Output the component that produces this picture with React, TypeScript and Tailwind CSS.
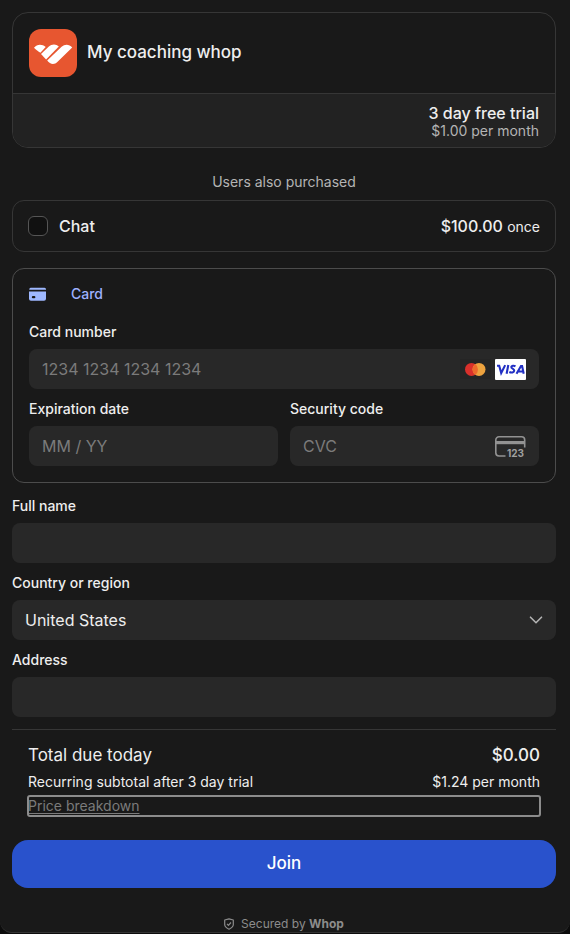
import type { ReactNode } from "react";

const labelClass = "mt-[10px] mb-[7px] block text-sm leading-5 font-medium text-[#eeeeee]";
const fieldClass =
  "block h-10 w-full rounded-lg bg-[#282828] px-[13px] text-base text-[#eeeeee] outline-none placeholder:text-[#7b7b7b]";

function Field({ id, label, placeholder, children }: { id: string; label: string; placeholder?: string; children?: ReactNode }) {
  return (
    <div>
      <label htmlFor={id} className={labelClass}>
        {label}
      </label>
      <div className="relative">
        <input id={id} type="text" placeholder={placeholder} className={fieldClass} />
        {children}
      </div>
    </div>
  );
}

function WhopLogo() {
  return (
    <svg viewBox="0 0 48 48" className="size-12 shrink-0" aria-hidden="true">
      <rect width="48" height="48" rx="12" fill="#e75630" />
      <g fill="#ffffff">
        <path d="M5 18.8 C8 14.8 13.2 14.8 16.7 18.1 L11.4 23.7 C9.2 22.6 7.1 20.9 5 18.8Z" />
        <path d="M12 24.9 L19.6 17.7 C22.9 14.8 27.2 14.8 29.8 17.6 L17.1 30.4Z" />
        <path d="M18.2 31.6 L32.6 17.7 C35.8 14.8 40.3 14.9 43.2 18.5 L28.6 32.8 C25.2 36.2 21.3 35.6 18.2 31.6Z" />
      </g>
    </svg>
  );
}

function CardIcon() {
  return (
    <svg viewBox="0 0 18 14" className="h-[14px] w-[18px]" aria-hidden="true">
      <path fill="#9eb8ff" d="M2 .8h13.5A1.5 1.5 0 0 1 17 2.3v.5H.3v-.5A1.5 1.5 0 0 1 2 .8Z" />
      <path
        fill="#9eb8ff"
        fillRule="evenodd"
        d="M0 4.4h17v7.4a2 2 0 0 1-2 2H2a2 2 0 0 1-2-2ZM4 9.1a1.2 1.1 0 0 0 0 2.2h1.2a1.2 1.1 0 0 0 0-2.2Z"
      />
    </svg>
  );
}

function CardBrands() {
  return (
    <svg viewBox="0 0 66 22" className="absolute top-[9px] right-[13px] h-[22px] w-[66px]" aria-hidden="true">
      <rect x="0" y="1" width="31" height="20" rx="1" fill="#252525" />
      <circle cx="11.5" cy="11.4" r="6.5" fill="#d9302b" />
      <circle cx="19" cy="11.4" r="6.5" fill="#eda33f" />
      <path fill="#ed6a2c" d="M15.25 6.1a6.5 6.5 0 0 1 0 10.6 6.5 6.5 0 0 1 0-10.6Z" />
      <rect x="35" y="1" width="31" height="21" rx="1" fill="#ffffff" />
      <g fill="none" stroke="#2230c4" strokeWidth="2.1">
        <path d="M37 7.7h2.2L41.2 15l4-7.9M48.3 7 46.6 15.7" />
        <path d="M55.5 8.2c-1.8-.9-4-.6-4.2.8-.2 1.6 3.1 1.6 2.9 3.6-.2 2-2.8 2.4-4.9 1.4" />
        <path d="M56.5 15.7 61 8h1.1l1.6 7.7M58.5 13.5h4.3" />
      </g>
    </svg>
  );
}

function CvcIcon() {
  return (
    <svg viewBox="0 0 32 24" className="absolute top-[9px] right-[13px] h-6 w-8" aria-hidden="true">
      <path
        fill="none"
        stroke="#929292"
        strokeWidth="1.6"
        d="M11.5 21H5a3.2 3.2 0 0 1-3.2-3.2V5A3.2 3.2 0 0 1 5 1.8h22.5A3.2 3.2 0 0 1 30.7 5v7.5"
      />
      <path fill="#929292" d="M2 6h29v3.2H2z" />
      <text x="13" y="21.8" fill="#a0a0a0" fontSize="10" fontWeight="700" fontFamily="Inter, sans-serif">
        123
      </text>
    </svg>
  );
}

export default function App() {
  return (
    <div className="min-h-screen bg-[#0c0c0c] font-['Inter',sans-serif] text-[#eeeeee]">
      <main className="rounded-b-xl border-b border-[#333333] bg-[#191919] pt-3 pr-[14px] pl-3">
        <section className="overflow-hidden rounded-2xl border border-[#363636]">
          <div className="flex h-20 items-center gap-[10px] px-4">
            <WhopLogo />
            <h1 className="pb-[3px] text-[17px] leading-6 font-medium">My coaching whop</h1>
          </div>
          <div className="border-t border-[#363636] bg-[#222222] px-4 pt-[9px] pb-2 text-right">
            <p className="text-base leading-5 font-medium">3 day free trial</p>
            <p className="text-sm leading-4 text-[#b4b4b4]">$1.00 per month</p>
          </div>
        </section>

        <p className="mt-6 text-center text-sm leading-5 text-[#b4b4b4]">Users also purchased</p>

        <label className="mt-2 flex h-13 items-center rounded-xl border border-[#363636] px-[15px]">
          <input
            type="checkbox"
            className="size-5 appearance-none rounded-[6px] border border-[#555555] bg-[#111111] checked:bg-[#2952cc]"
          />
          <span className="ml-[11px] text-base font-medium">Chat</span>
          <span className="ml-auto text-base font-medium">
            $100.00 <span className="text-sm font-normal">once</span>
          </span>
        </label>

        <section className="mt-4 rounded-xl border border-[#4c4c4c] px-4 pt-[15px] pb-4">
          <div className="mb-[18px] flex h-5 items-center gap-[24px] text-sm font-medium text-[#9eb1ff]">
            <CardIcon />
            <h2>Card</h2>
          </div>
          <Field id="card-number" label="Card number" placeholder="1234 1234 1234 1234">
            <CardBrands />
          </Field>
          <div className="grid grid-cols-2 gap-3">
            <Field id="expiry" label="Expiration date" placeholder="MM / YY" />
            <Field id="cvc" label="Security code" placeholder="CVC">
              <CvcIcon />
            </Field>
          </div>
        </section>

        <div className="pt-[3px]">
          <Field id="full-name" label="Full name" />
          <label htmlFor="country" className={labelClass}>
            Country or region
          </label>
          <div className="relative">
            <select id="country" className={`${fieldClass} appearance-none`}>
              <option>United States</option>
            </select>
            <svg viewBox="0 0 14 8" className="pointer-events-none absolute top-4 right-[13px] h-2 w-[14px]" aria-hidden="true">
              <path d="M1.5 1.2 7 6.7l5.5-5.5" fill="none" stroke="#b4b4b4" strokeWidth="1.6" strokeLinecap="round" />
            </svg>
          </div>
          <Field id="address" label="Address" />
        </div>

        <section className="mt-3 border-t border-[#363636] px-4 pt-[11px]">
          <div className="flex justify-between text-[17px] leading-7">
            <span>Total due today</span>
            <span className="font-medium">$0.00</span>
          </div>
          <div className="mt-[3px] flex justify-between text-sm leading-5">
            <span>Recurring subtotal after 3 day trial</span>
            <span>$1.24 per month</span>
          </div>
          <button
            type="button"
            className="mt-1 block h-5 w-full rounded-[2px] text-left text-sm leading-5 text-[#7b7b7b] underline underline-offset-2 outline-2 -outline-offset-1 outline-[#8c8c8c]"
          >
            Price breakdown
          </button>
        </section>

        <button type="button" className="mt-6 block h-12 w-full rounded-2xl bg-[#2952cc] text-[17px] font-medium text-white">
          Join
        </button>

        <footer className="mt-7 flex h-4 items-center justify-center gap-[7px] text-xs leading-4 text-[#8c8c8c]">
          <svg viewBox="0 0 10 12" className="h-3 w-[10px]" fill="none" stroke="#8c8c8c" strokeWidth="1.2" aria-hidden="true">
            <path d="M5 .8 9.3 2v4.6C9.3 8.8 7.3 10.2 5 11.2 2.7 10.2.7 8.8.7 6.6V2Z" strokeLinejoin="round" />
            <path d="m3 5.8 1.4 1.5L7 4.5" />
          </svg>
          <span>
            Secured by <strong className="font-bold">Whop</strong>
          </span>
        </footer>
      </main>
    </div>
  );
}
